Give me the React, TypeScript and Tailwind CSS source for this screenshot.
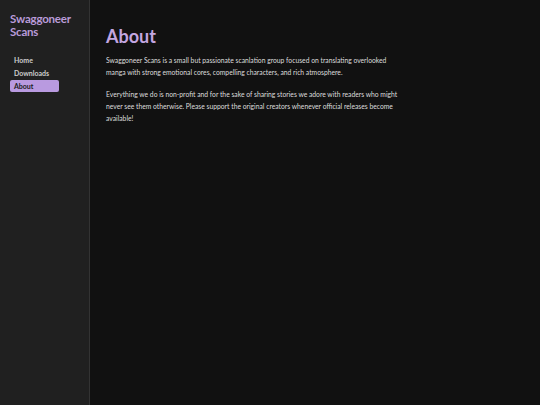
import React from "react";

const NAV = ["Home", "Downloads", "About"];

export default function App() {
  return (
    <div className="flex min-h-[405px] bg-[#111111] font-['Lato',sans-serif]">
      <aside className="w-[90px] shrink-0 bg-[#202020] border-r border-[#333333] px-[10px] pt-[12px]">
        <h1 className="text-[11.5px] font-bold leading-[13px] tracking-[-0.2px] text-[#b99bd9]">Swaggoneer Scans</h1>
        <nav className="mt-[16px] flex flex-col gap-[1px]">
          {NAV.map(n => (
            <a
              key={n}
              href="#"
              className={
                n === "About"
                  ? "block rounded-[2px] bg-[#b99ae0] px-[4px] py-[1px] text-[7px] font-bold leading-[10px] text-[#1a1a1a] w-[49px]"
                  : "block px-[4px] py-[1px] text-[7px] font-bold leading-[10px] text-[#cccccc]"
              }
            >
              {n}
            </a>
          ))}
        </nav>
      </aside>
      <main className="flex-1 px-[16px] pt-[24px]">
        <h2 className="text-[18px] font-bold leading-[24px] text-[#c3a6e0]">About</h2>
        <div className="mt-[6px] max-w-[300px] text-[6.75px] leading-[12px] text-[#dddddd] space-y-[10px]">
          <p>
            Swaggoneer Scans is a small but passionate scanlation group focused on translating overlooked
            manga with strong emotional cores, compelling characters, and rich atmosphere.
          </p>
          <p>
            Everything we do is non-profit and for the sake of sharing stories we adore with readers who might
            never see them otherwise. Please support the original creators whenever official releases become
            available!
          </p>
        </div>
      </main>
    </div>
  );
}
